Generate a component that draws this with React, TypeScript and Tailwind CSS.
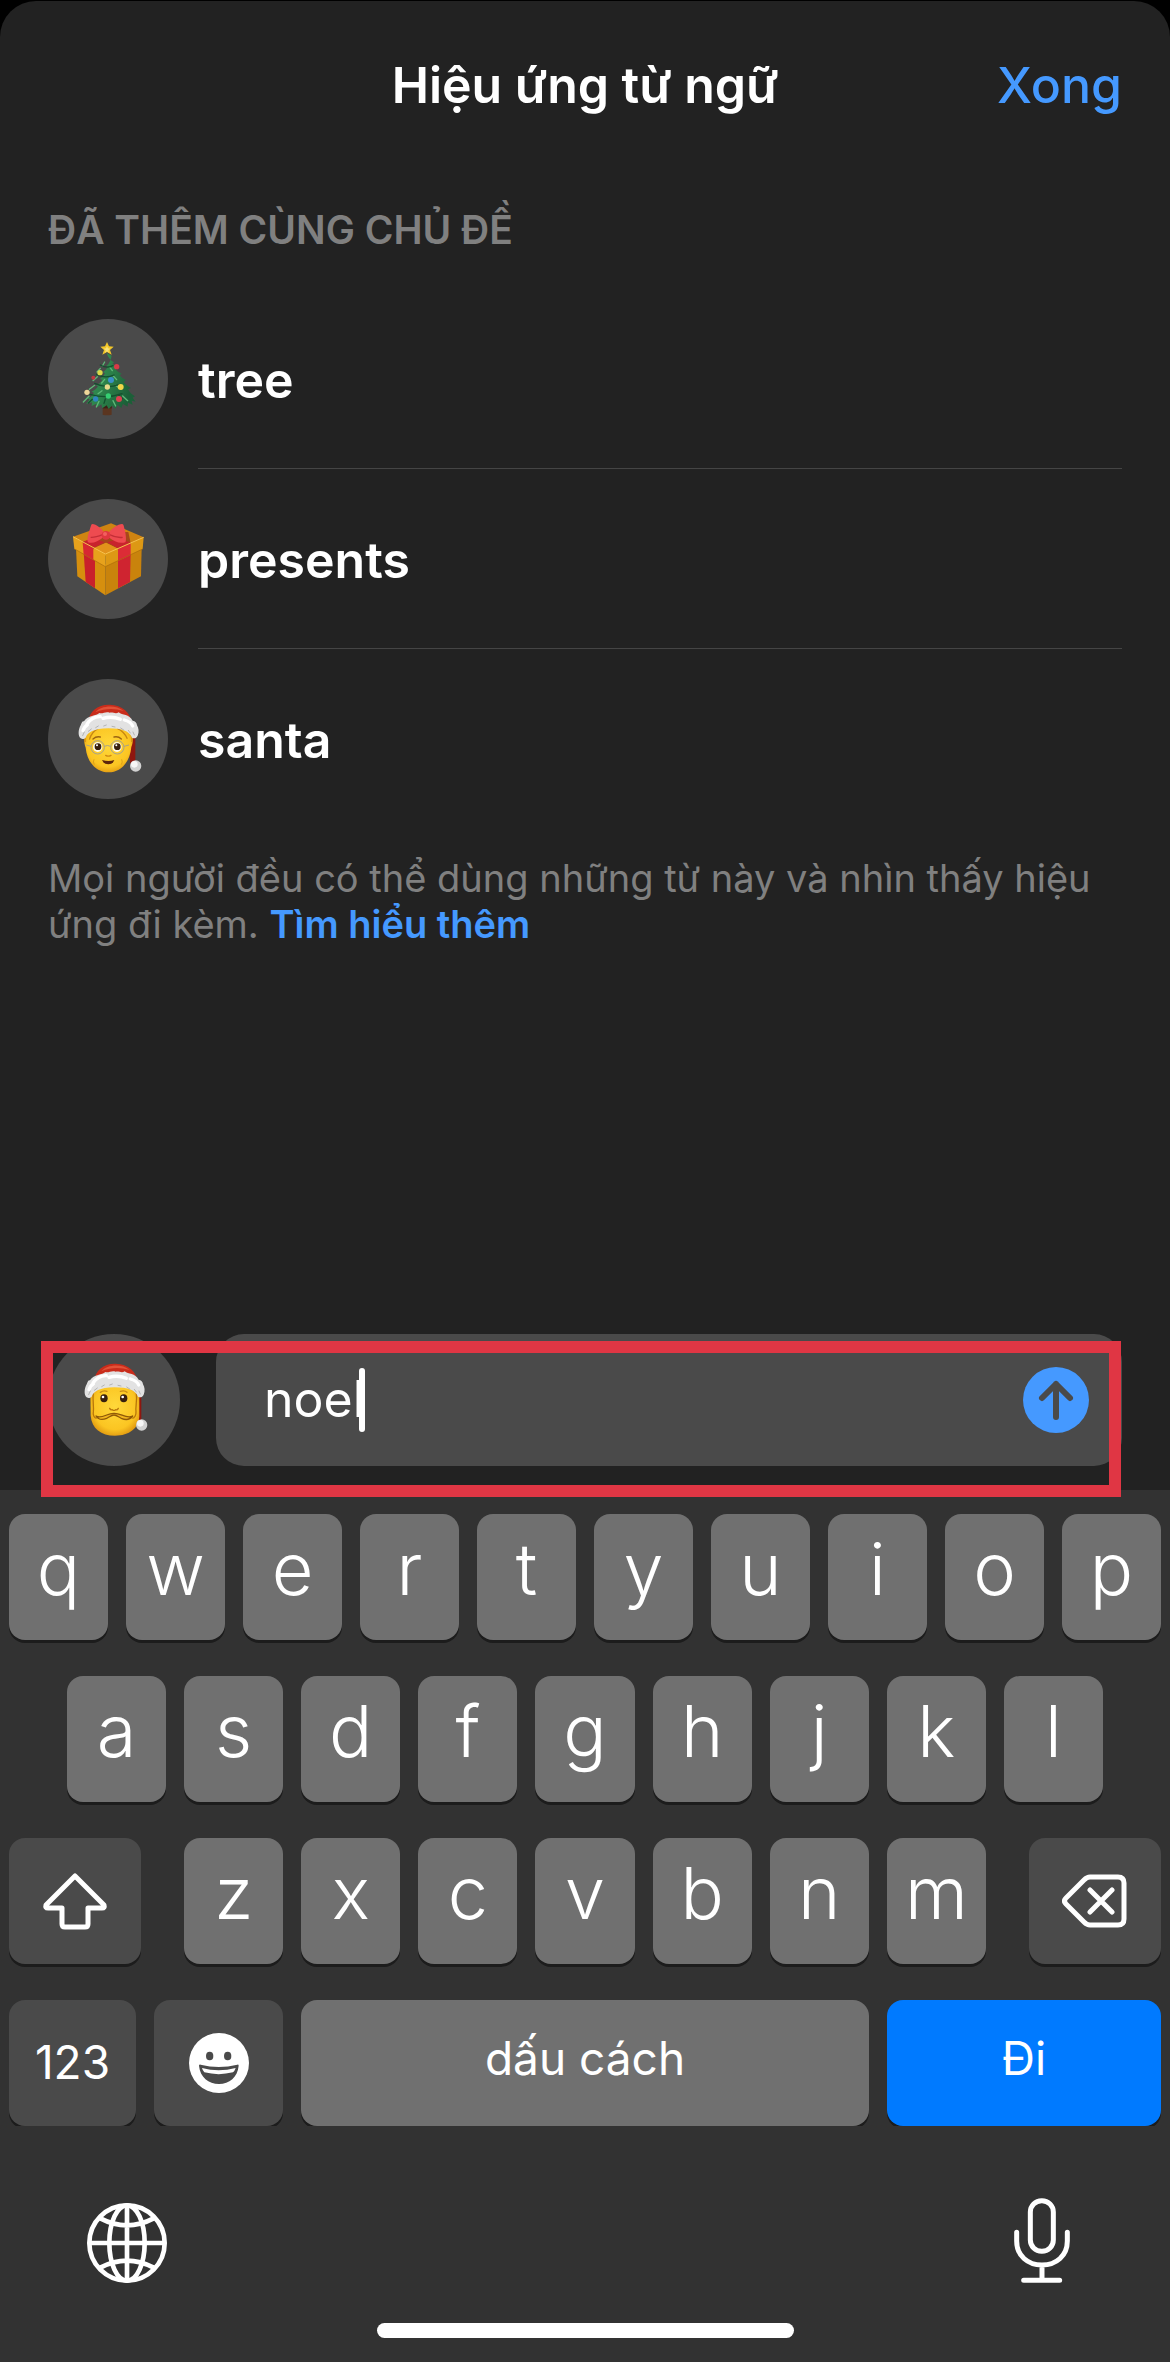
import React, { useState } from 'react';

interface IconProps {
  className?: string;
}

interface KeyProps {
  children: React.ReactNode;
  label?: string;
  className?: string;
  onClick?: () => void;
}

const TreeIcon: React.FC<IconProps> = ({ className }) => (
  <svg viewBox="0 0 240 240" className={className} aria-hidden="true">
    <defs>
      <linearGradient id="pine" x1="0" x2="1" y1="0" y2="0.4">
        <stop offset="0" stopColor="#3c9a5b" />
        <stop offset="0.55" stopColor="#2b8049" />
        <stop offset="1" stopColor="#1c5f38" />
      </linearGradient>
    </defs>
    <path d="M104 196h27v31q-14 4-27 0z" fill="#5a3520" />
    <path d="M104 196h27v12h-27z" fill="#3b2015" />
    <path
      fill="url(#pine)"
      d="M116 42c5 15 13 24 22 28l-5 4 14 10-6 4c5 9 12 13 20 16l-6 5c6 8 13 12 19 14l-7 6c6 8 13 13 22 18l-9 4c5 9 11 16 21 21l-7 4 9 12-12-3 3 12-14-6-1 12-14-8-5 12-11-9-7 12-10-10-10 10-6-11-13 9-3-12-13 9-2-11-14 7 1-11-17 5 10-14-6-2c8-4 15-11 19-18l-7-3c9-4 16-10 19-17l-6-2c9-4 15-9 19-17l-8-2c8-5 13-11 16-18l-6-2c8-6 13-12 15-18l-5-1c9-7 13-17 16-31z"
    />
    <path
      fill="none"
      stroke="#5fb878"
      strokeWidth="4"
      strokeLinecap="round"
      d="M110 69l-7 12M97 88l-10 11M88 113l-13 12M80 139l-16 12M63 172l-17 17M93 187l-8 17M125 84l8 11M136 111l10 11M143 139l17 12M164 171l15 14M135 185l8 16M110 121l-9 11M102 155l-12 9"
    />
    <path
      fill="none"
      stroke="#14502f"
      strokeWidth="4"
      strokeLinecap="round"
      d="M97 78q19 12 38 2M86 106q26 14 52 2M80 133q35 17 72 4M66 166q50 15 96-2M112 180l-4 13M73 181l-12 11M151 167l12 12"
    />
    <path d="M117 9l6 13 14 1-11 10 5 14-14-8-14 8 5-14-11-10 14-1z" fill="#f2c628" />
    <path d="M117 20l3 8 7 1-6 5 2 7-6-4-6 4 2-7-6-5 7-1z" fill="#f8e27a" />
    <circle cx="146" cy="83" r="8" fill="#d93a47" />
    <circle cx="76" cy="116" r="6" fill="#c23840" />
    <circle cx="96" cy="101" r="8" fill="#ddda4a" />
    <circle cx="129" cy="123" r="9" fill="#3b8fc9" />
    <circle cx="118" cy="144" r="8" fill="#e8d98b" />
    <circle cx="158" cy="144" r="9" fill="#f0d548" />
    <circle cx="57" cy="160" r="8" fill="#f0d79a" />
    <circle cx="121" cy="171" r="8" fill="#35cf72" />
    <circle cx="83" cy="180" r="8" fill="#2f86bf" />
    <circle cx="153" cy="180" r="9" fill="#dc4050" />
  </svg>
);

const GiftIcon: React.FC<IconProps> = ({ className }) => (
  <svg viewBox="0 0 240 240" className={className} aria-hidden="true">
    <path d="M24 88l88 48v93L28 172z" fill="#d68f0e" />
    <path d="M221 88l-109 48v93l107-57z" fill="#c9830c" />
    <path d="M47 100l34 19v89l-28-19z" fill="#c9202b" />
    <path d="M188 102l-38 17v89l36-19z" fill="#cf2430" />
    <path d="M15 53L129 13l98 42-115 56z" fill="#cf8411" />
    <path d="M15 53l97 52v38L19 90z" fill="#e7a21c" />
    <path d="M227 55l-115 50v38l112-53z" fill="#dd9814" />
    <path d="M44 69l77-30 60 0 7 33-38 17-36-18-38 20z" fill="#a8471b" />
    <path d="M76 88l38-17 36 18-38 16z" fill="#e2931b" />
    <path d="M44 69l32 17v38l-29-17z" fill="#d72832" />
    <path d="M188 72l-38 17v38l38-18z" fill="#dc2c36" />
    <path d="M44 69l30-12 35 13-33 17zM188 72l-30-15-39 13 31 18z" fill="#c8232d" />
    <path d="M15 53l97 52 115-50" fill="none" stroke="#f6c24e" strokeWidth="3" />
    <path d="M20 90l92 53 112-53" fill="none" stroke="#a86a0a" strokeWidth="2" />
    <path d="M106 55c-16 13-33 20-46 15-5-9 5-38 10-53 3-8 34 11 39 25z" fill="#ee4b50" />
    <path d="M122 55c16 13 33 20 50 15 5-9-1-38-6-53-4-8-38 11-45 25z" fill="#ee4b50" />
    <path d="M104 47c-13 5-27 9-36 8M124 47c15 7 27 10 40 8" fill="none" stroke="#c42e37" strokeWidth="4" />
    <circle cx="114" cy="49" r="13" fill="#e0373f" />
    <circle cx="111" cy="45" r="6" fill="#f2605f" />
  </svg>
);

const HatBack = () => (
  <>
    <path d="M181 82c14 5 21 20 21 44v68h-15l-7-60z" fill="#8f170f" />
    <path d="M60 70c4-34 29-54 65-53 38 1 63 23 68 60z" fill="#c92c1b" />
    <path d="M82 40c17-20 60-24 85-4-30-9-56-8-85 4z" fill="#e25238" />
  </>
);

const HatFur = () => (
  <>
    <path
      d="M48 67c-6-1-7 6-10 12-7 12-8 27-3 36 5 7 13 6 18 1 5-15 24-28 68-28 42 0 63 9 71 28 6 4 14 1 17-6 5-12 3-22-2-31-1-8-5-13-13-14-10-20-32-16-42-25-9 6-16-1-27 1-12-5-20 4-31 1-9 10-34 5-46 25z"
      fill="#e2e2e2"
    />
    <path
      d="M57 75q16-23 40-22M105 58q27-8 52 3M169 63q20 5 25 18M45 95q4-13 13-17"
      fill="none"
      stroke="#ffffff"
      strokeWidth="10"
      strokeLinecap="round"
    />
    <path
      d="M44 110l5-11M61 97l9-7M83 86l8-5M107 81l8-3M132 82l9 2M158 87l9 6M181 94l6 8M199 108l-4-9"
      stroke="#b4b4b4"
      strokeWidth="3"
      strokeLinecap="round"
    />
    <circle cx="203" cy="201" r="17" fill="#d2d2d2" />
    <circle cx="199" cy="196" r="10" fill="#f6f6f6" />
  </>
);

const FaceGradient: React.FC<{ id: string }> = ({ id }) => (
  <defs>
    <radialGradient id={id} cx="0.5" cy="0.45" r="0.62">
      <stop offset="0" stopColor="#ffd83a" />
      <stop offset="0.7" stopColor="#fbc522" />
      <stop offset="1" stopColor="#d98c0c" />
    </radialGradient>
  </defs>
);

const SantaIcon: React.FC<IconProps> = ({ className }) => (
  <svg viewBox="0 0 240 240" className={className} aria-hidden="true">
    <FaceGradient id="elder-face" />
    <HatBack />
    <path d="M49 104c3-24 31-31 73-31 43 0 69 9 72 31 2 18 0 31-4 40-4 47-33 76-68 76s-65-28-69-74c-4-11-6-24-4-42z" fill="url(#elder-face)" />
    <path d="M51 129c-2-22 2-37 14-43M192 129c2-22-3-37-15-43M64 122q7-24 26-33M178 119q-9-21-30-31" fill="none" stroke="#c88612" strokeWidth="4" />
    <path d="M75 120q10-9 22-6M138 114q13-3 22 6" fill="none" stroke="#9c6412" strokeWidth="4" strokeLinecap="round" />
    <ellipse cx="89" cy="144" rx="14" ry="15" fill="#fffbe8" />
    <ellipse cx="147" cy="144" rx="14" ry="15" fill="#fffbe8" />
    <circle cx="90" cy="143" r="10" fill="#38200f" />
    <circle cx="148" cy="143" r="10" fill="#38200f" />
    <circle cx="87" cy="139" r="3" fill="#fff" />
    <circle cx="145" cy="139" r="3" fill="#fff" />
    <g fill="none" stroke="#a8a28a" strokeWidth="3">
      <circle cx="89" cy="145" r="20" />
      <circle cx="148" cy="145" r="20" />
      <path d="M109 142q9-5 19 0M69 142l-14-4M168 142l15-4" />
    </g>
    <path d="M113 169q8 5 16 0" fill="none" stroke="#d08b12" strokeWidth="4" strokeLinecap="round" />
    <path d="M102 183q20 6 37 0-4 13-18 13t-19-13z" fill="#5d260c" />
    <path d="M78 181q-4 8 1 16M161 181q4 8-1 16" fill="none" stroke="#dca017" strokeWidth="3" />
    <HatFur />
  </svg>
);

const BeardedSantaIcon: React.FC<IconProps> = ({ className }) => (
  <svg viewBox="0 0 240 240" className={className} aria-hidden="true">
    <FaceGradient id="beard-face" />
    <g transform="translate(0 -6)">
      <HatBack />
    </g>
    <path d="M49 95c0-20 33-28 73-28s74 9 74 28v70c0 40-31 62-73 62s-70-22-73-60z" fill="url(#beard-face)" />
    <path d="M58 97c-3 24 2 42 0 58-2 11 3 19 10 20M187 97c3 24-3 42-1 58 1 11-5 19-11 20" fill="none" stroke="#b87609" strokeWidth="4" />
    <path d="M79 97q10-7 20-3M139 94q13-4 20 3" fill="none" stroke="#c78b14" strokeWidth="4" strokeLinecap="round" />
    <ellipse cx="90" cy="115" rx="11" ry="12" fill="#38200f" />
    <ellipse cx="149" cy="115" rx="11" ry="12" fill="#38200f" />
    <circle cx="87" cy="111" r="4" fill="#fff" />
    <circle cx="146" cy="111" r="4" fill="#fff" />
    <path d="M107 145q3 6 8 4 5 4 10 0 6 2 8-4" fill="none" stroke="#b9770b" strokeWidth="4" strokeLinecap="round" />
    <path d="M66 168c17 10 34-9 54-8 20-1 38 18 56 8-8 11-22 12-34 7-8-4-15-10-22-10s-14 6-22 10c-12 5-25 4-32-7z" fill="#f2b51d" stroke="#8f5908" strokeWidth="4" strokeLinejoin="round" />
    <g transform="translate(0 -6)">
      <HatFur />
    </g>
  </svg>
);

const ArrowUpIcon: React.FC<IconProps> = ({ className }) => (
  <svg viewBox="0 0 66 66" className={className} fill="none" stroke="currentColor" strokeWidth="6" strokeLinecap="round" strokeLinejoin="round" aria-hidden="true">
    <path d="M33 50V17M19 31l14-14 14 14" />
  </svg>
);

const ShiftIcon: React.FC<IconProps> = ({ className }) => (
  <svg viewBox="0 0 66 58" className={className} fill="none" stroke="currentColor" strokeWidth="5" strokeLinejoin="round" aria-hidden="true">
    <path d="M33 4L4 33q-1 3 2 3h14v16q0 3 3 3h20q3 0 3-3V36h14q3 0 2-3z" />
  </svg>
);

const DeleteIcon: React.FC<IconProps> = ({ className }) => (
  <svg viewBox="0 0 66 56" className={className} fill="none" stroke="currentColor" strokeWidth="5" strokeLinecap="round" strokeLinejoin="round" aria-hidden="true">
    <path d="M28 4h28q6 0 6 6v36q0 6-6 6H28q-3 0-6-3L4 31q-3-3 0-6L22 7q3-3 6-3zM28 17l22 22M50 17L28 39" />
  </svg>
);

const SmileyIcon: React.FC<IconProps> = ({ className }) => (
  <svg viewBox="0 0 180 180" className={className} aria-hidden="true">
    <circle cx="90" cy="90" r="90" fill="#fff" />
    <g fill="#4a4a4a">
      <ellipse cx="62" cy="69" rx="11" ry="13" />
      <ellipse cx="116" cy="69" rx="11" ry="13" />
      <path d="M30 98q0-4 5-3 54 14 110 0 4-1 4 3c-3 34-28 55-59 55s-57-21-60-55z" />
    </g>
    <path d="M39 105q50 14 101 0-3 9-8 13-43 11-86 0-5-5-7-13z" fill="#fff" />
  </svg>
);

const GlobeIcon: React.FC<IconProps> = ({ className }) => (
  <svg viewBox="0 0 240 240" className={className} fill="none" stroke="currentColor" strokeWidth="14" aria-hidden="true">
    <circle cx="120" cy="120" r="113" />
    <ellipse cx="120" cy="120" rx="53" ry="113" />
    <path d="M120 7v226M7 120h226M40 46q80 42 160 0M40 194q80-42 160 0" />
  </svg>
);

const MicIcon: React.FC<IconProps> = ({ className }) => (
  <svg viewBox="0 0 168 256" className={className} fill="none" stroke="currentColor" strokeWidth="15" strokeLinecap="round" aria-hidden="true">
    <rect x="49" y="8" width="69" height="152" rx="34" />
    <path d="M8 103v26c0 44 33 72 76 72s76-28 76-72v-26M84 201v46M29 247h108" />
  </svg>
);

const Key: React.FC<KeyProps> = ({ children, label, className = 'bg-[#707070]', onClick }) => (
  <button
    type="button"
    aria-label={label}
    onClick={onClick}
    className={`flex h-[126px] min-w-0 flex-1 items-center justify-center rounded-2xl shadow-[0_3px_0_#1c1c1c] ${className}`}
  >
    {children}
  </button>
);

const LetterKey: React.FC<{ letter: string; onPress: (letter: string) => void }> = ({ letter, onPress }) => (
  <Key onClick={() => onPress(letter)}>
    <span className="pb-4 text-[72px] leading-none font-light">{letter}</span>
  </Key>
);

const words = [
  { word: 'tree', Icon: TreeIcon },
  { word: 'presents', Icon: GiftIcon },
  { word: 'santa', Icon: SantaIcon },
];

export default function App() {
  const [text, setText] = useState('noel');

  const press = (letter: string) => setText((value) => value + letter);
  const letters = (row: string) =>
    row.split('').map((letter) => <LetterKey key={letter} letter={letter} onPress={press} />);

  return (
    <div className="min-h-screen bg-black pt-px font-['Inter','Liberation_Sans',sans-serif] text-white">
      <div className="flex min-h-[calc(100vh-1px)] flex-col rounded-t-[36px] bg-[#222222]">
        <header className="grid h-[168px] grid-cols-[1fr_auto_1fr] items-center px-12 text-[50px]">
          <h1 className="col-start-2 font-semibold">Hiệu ứng từ ngữ</h1>
          <button type="button" className="justify-self-end font-medium text-[#4599ff]">
            Xong
          </button>
        </header>

        <main className="flex flex-1 flex-col px-12">
          <h2 className="mt-[38px] mb-9 text-[39px] leading-[46px] font-semibold text-[#808080]">ĐÃ THÊM CÙNG CHỦ ĐỀ</h2>

          <ul>
            {words.map(({ word, Icon }) => (
              <li key={word} className="group flex h-[180px] items-center gap-[30px]">
                <span className="flex size-[120px] shrink-0 items-center justify-center rounded-full bg-[#4a4a4a]">
                  <Icon className="size-20" />
                </span>
                <span className="flex h-full flex-1 items-center border-b border-[#454545] pt-1 text-[50px] font-semibold group-last:border-transparent">
                  {word}
                </span>
              </li>
            ))}
          </ul>

          <p className="mt-[26px] text-[38px] leading-[46px] text-[#808080]">
            Mọi người đều có thể dùng những từ này và nhìn thấy hiệu ứng đi kèm.{' '}
            <a href="#learn-more" className="font-semibold text-[#4599ff]">
              Tìm hiểu thêm
            </a>
          </p>
        </main>

        <form className="relative flex gap-9 px-12 pb-6" onSubmit={(e) => e.preventDefault()}>
          <button
            type="button"
            aria-label="Emoji"
            className="flex size-[132px] shrink-0 items-center justify-center rounded-full bg-[#4a4a4a]"
          >
            <BeardedSantaIcon className="size-20" />
          </button>
          <label className="flex min-w-0 flex-1 items-center rounded-[28px] bg-[#4a4a4a] pr-[33px] pl-12">
            <input
              type="text"
              aria-label="Từ ngữ"
              value={text}
              onChange={(e) => setText(e.target.value)}
              className="field-sizing-content max-w-full bg-transparent text-[50px] caret-transparent outline-none"
            />
            <span className="-ml-[6px] h-16 w-[6px] shrink-0 rounded-full bg-white" />
            <button
              type="submit"
              aria-label="Gửi"
              className="ml-auto size-[66px] shrink-0 rounded-full bg-[#4599ff] text-[#4a4a4a]"
            >
              <ArrowUpIcon className="size-full" />
            </button>
          </label>
          <div className="pointer-events-none absolute top-[7px] right-[49px] -bottom-[7px] left-[41px] z-10 border-12 border-[#e03644]" />
        </form>

        <section className="flex flex-col gap-9 bg-[#323232] px-[9px] pt-6">
          <div className="flex gap-[18px]">{letters('qwertyuiop')}</div>
          <div className="flex gap-[18px] px-[58px]">{letters('asdfghjkl')}</div>
          <div className="grid grid-cols-[132fr_801fr_132fr] gap-[43px]">
            <Key label="Shift" className="bg-[#4a4a4a]">
              <ShiftIcon className="w-[66px]" />
            </Key>
            <div className="flex gap-[18px]">{letters('zxcvbnm')}</div>
            <Key label="Xóa" className="bg-[#4a4a4a]" onClick={() => setText((value) => value.slice(0, -1))}>
              <DeleteIcon className="w-[66px]" />
            </Key>
          </div>
          <div className="grid grid-cols-[127fr_129fr_568fr_274fr] gap-[18px] text-[46px]">
            <Key className="bg-[#4a4a4a]">123</Key>
            <Key label="Emoji" className="bg-[#4a4a4a]">
              <SmileyIcon className="size-[60px]" />
            </Key>
            <Key onClick={() => press(' ')}>
              <span className="pb-2">dấu cách</span>
            </Key>
            <Key className="bg-[#007aff]">
              <span className="pb-2">Đi</span>
            </Key>
          </div>
        </section>

        <footer className="bg-[#323232] pt-[72px] pb-6">
          <div className="flex items-end justify-between pr-[100px] pl-[87px]">
            <button type="button" aria-label="Ngôn ngữ">
              <GlobeIcon className="size-20" />
            </button>
            <button type="button" aria-label="Đọc chính tả">
              <MicIcon className="w-14" />
            </button>
          </div>
          <div className="mx-auto mt-10 h-[15px] w-[417px] rounded-full bg-white" />
        </footer>
      </div>
    </div>
  );
}
